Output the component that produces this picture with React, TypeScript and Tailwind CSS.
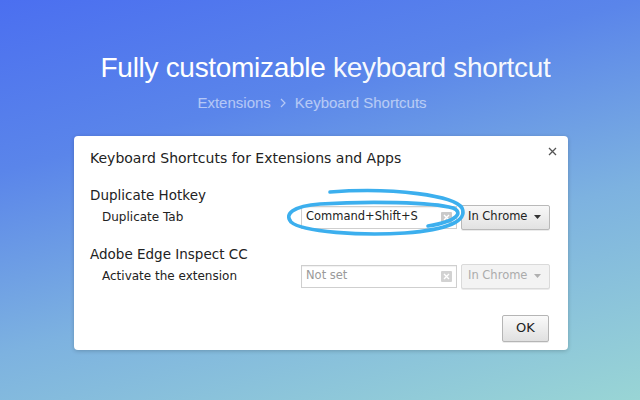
import React from "react";

const UI_FONT = { fontFamily: '"DejaVu Sans", "Noto Sans", sans-serif' };

function ClearBox({ dim = false }: { dim?: boolean }) {
  return (
    <span
      className={`flex h-[11px] w-[11px] items-center justify-center rounded-[1px] ${dim ? "bg-[#d2d2d2]" : "bg-[#c9c9c9]"}`}
    >
      <svg width="7" height="7" viewBox="0 0 7 7">
        <path d="M1 1 L6 6 M6 1 L1 6" stroke="#fff" strokeWidth="1.4" />
      </svg>
    </span>
  );
}

function ShortcutInput({ value, placeholder }: { value?: string; placeholder?: string }) {
  return (
    <div className="flex h-[23px] w-[156px] items-center justify-between border border-[#cfcfcf] bg-white pl-[4px] pr-[4px] shadow-[inset_0_1px_1px_rgba(0,0,0,0.06)]">
      <span className={`text-[11.5px] ${value ? "text-[#222]" : "text-[#9a9a9a]"}`}>{value ?? placeholder}</span>
      <ClearBox dim={!value} />
    </div>
  );
}

function ScopeSelect({ disabled = false }: { disabled?: boolean }) {
  return (
    <div
      className={`flex h-[25px] w-[89px] items-center justify-between rounded-[2px] border pl-[6px] pr-[8px] shadow-[0_1px_0_rgba(0,0,0,0.08)] ${
        disabled
          ? "border-[#dadada] bg-[#f3f3f3] text-[#ababab]"
          : "border-[#b9b9b9] bg-gradient-to-b from-[#f8f8f8] to-[#e2e2e2] text-[#222]"
      }`}
    >
      <span className="text-[11.5px]">In Chrome</span>
      <svg width="7" height="4" viewBox="0 0 7 4">
        <path d="M0 0 H7 L3.5 4 Z" fill={disabled ? "#b0b0b0" : "#333"} />
      </svg>
    </div>
  );
}

function Row({ label, children }: { label: string; children: React.ReactNode }) {
  return (
    <div className="flex items-center justify-between">
      <span className="pl-3 text-[12px] text-[#222]">{label}</span>
      <div className="flex items-center gap-[4px]">{children}</div>
    </div>
  );
}

export default function App() {
  return (
    <div className="relative flex h-[400px] w-[640px] flex-col items-center overflow-hidden bg-[linear-gradient(165deg,#4b6ff0_0%,#5a85ea_30%,#7db2e0_62%,#99d5d5_100%)]">
      {/* heading */}
      <h1
        className="ml-[11px] mt-[50px] text-[28px] leading-[36px] tracking-[-0.3px] text-white"
        style={{ fontFamily: '"Liberation Sans", Arial, sans-serif' }}
      >
        <span className="font-normal">Fully customizable</span>{" "}
        <span className="font-light opacity-95">keyboard shortcut</span>
      </h1>
      <div
        className="mr-[16px] mt-[6px] flex items-center gap-[9px] text-[15px] text-white/55"
        style={{ fontFamily: '"Liberation Sans", Arial, sans-serif' }}
      >
        <span>Extensions</span>
        <svg width="6" height="10" viewBox="0 0 6 10">
          <path d="M1 1 L5 5 L1 9" fill="none" stroke="currentColor" strokeWidth="1.2" />
        </svg>
        <span>Keyboard Shortcuts</span>
      </div>

      {/* dialog */}
      <div
        className="relative ml-[2px] mt-[21px] flex h-[214px] w-[494px] flex-col rounded-[4px] bg-white pb-[8px] pl-4 pr-[18px] pt-[12px] shadow-[0_1px_4px_rgba(0,0,0,0.2)]"
        style={UI_FONT}
      >
        <svg className="absolute right-[11px] top-[11px]" width="9" height="9" viewBox="0 0 9 9">
          <path d="M1 1 L8 8 M8 1 L1 8" stroke="#555" strokeWidth="1.3" />
        </svg>

        <div className="text-[14px] leading-[20px] text-[#222]">Keyboard Shortcuts for Extensions and Apps</div>

        <div className="mt-[17px] text-[13.5px] leading-[20px] text-[#222]">Duplicate Hotkey</div>
        <Row label="Duplicate Tab">
          <ShortcutInput value="Command+Shift+S" />
          <ScopeSelect />
        </Row>

        <div className="mt-[14px] text-[13.5px] leading-[20px] text-[#222]">Adobe Edge Inspect CC</div>
        <Row label="Activate the extension">
          <ShortcutInput placeholder="Not set" />
          <ScopeSelect disabled />
        </Row>

        <div className="mt-auto flex justify-end pr-[1px]">
          <button className="h-[27px] w-[47px] rounded-[2px] border border-[#b5b5b5] bg-gradient-to-b from-[#fafafa] to-[#e0e0e0] text-[13px] text-[#222] shadow-[0_1px_0_rgba(0,0,0,0.08)]">
            OK
          </button>
        </div>
      </div>

      {/* hand-drawn highlight */}
      <svg className="pointer-events-none absolute left-0 top-0" width="640" height="400" viewBox="0 0 640 400">
        <path
          d="M330 192 C395 187 455 196 462 208 C468 221 447 230 405 233 C362 236 302 232 291 222 C284 214 293 206 320 204 C368 201 432 202 453 208 C463 212 459 221 428 226"
          fill="none"
          stroke="#3cafee"
          strokeWidth="3.6"
          strokeLinecap="round"
        />
      </svg>
    </div>
  );
}
